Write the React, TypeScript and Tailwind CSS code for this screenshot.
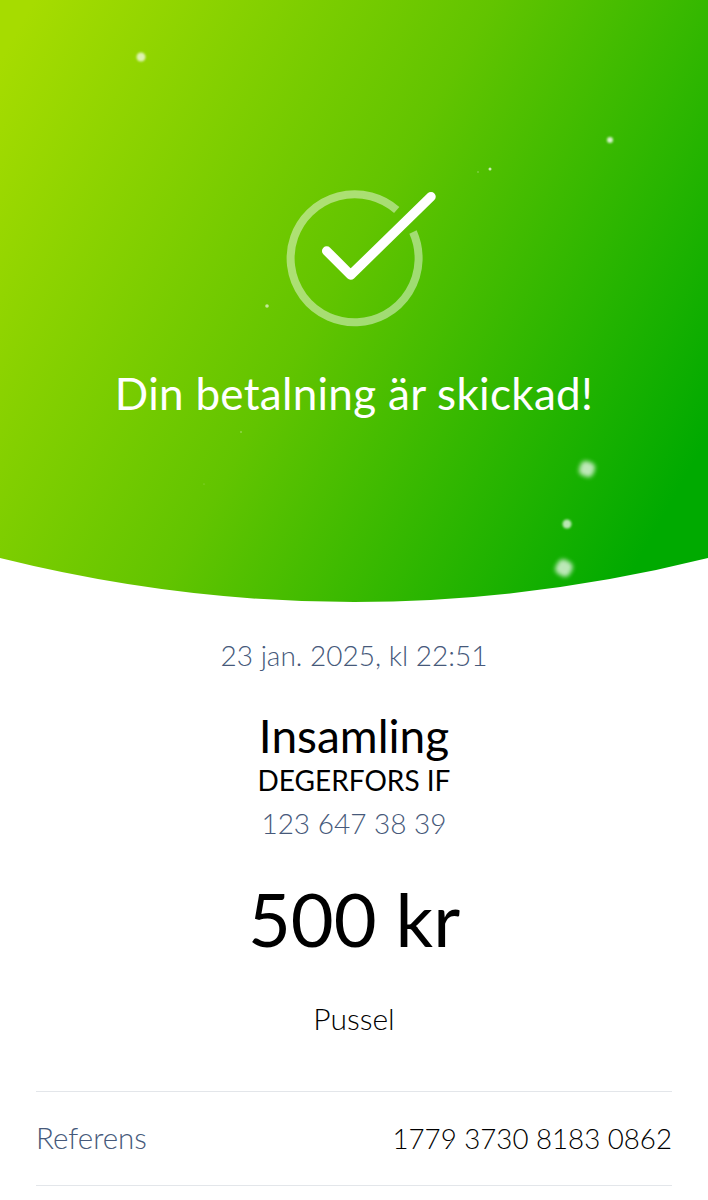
import React from 'react';

const DOTS = [
  { x: 141, y: 57, r: 4.5, o: 0.7 },
  { x: 610, y: 140, r: 3, o: 0.8 },
  { x: 490, y: 169, r: 1.5, o: 0.7 },
  { x: 478, y: 172, r: 0.7, o: 0.5 },
  { x: 267, y: 306, r: 1.8, o: 0.6 },
  { x: 241, y: 432, r: 0.7, o: 0.6 },
  { x: 204, y: 484, r: 0.5, o: 0.4 },
  { x: 567, y: 524, r: 4.5, o: 0.7 },
];

// the big flakes are soft rounded squares, not circles
const FLAKES = [
  { x: 587, y: 469, s: 15, a: 20 },
  { x: 564, y: 568, s: 16, a: 30 },
];

const HeaderBackground = () => (
  <svg className="absolute inset-0" width="708" height="602" viewBox="0 0 708 602">
    <defs>
      <linearGradient id="header" gradientUnits="userSpaceOnUse" x1="0" y1="60" x2="699" y2="454">
        <stop offset="0" stopColor="#a6dc00" />
        <stop offset="0.5" stopColor="#62c400" />
        <stop offset="1" stopColor="#00aa00" />
      </linearGradient>
      <filter id="soft" x="-50%" y="-50%" width="200%" height="200%">
        <feGaussianBlur stdDeviation="1.1" />
      </filter>
      <filter id="softer" x="-50%" y="-50%" width="200%" height="200%">
        <feGaussianBlur stdDeviation="2" />
      </filter>
    </defs>
    <path d="M0 0H708V558Q354 646 0 558Z" fill="url(#header)" />
    {DOTS.map((d) => (
      <circle key={`${d.x}-${d.y}`} cx={d.x} cy={d.y} r={d.r} fill="#fff" opacity={d.o} filter={d.r > 2 ? 'url(#soft)' : undefined} />
    ))}
    {FLAKES.map((f) => (
      <rect
        key={f.x}
        x={f.x - f.s / 2}
        y={f.y - f.s / 2}
        width={f.s}
        height={f.s}
        rx={f.s * 0.35}
        fill="#fff"
        opacity="0.72"
        filter="url(#softer)"
        transform={`rotate(${f.a} ${f.x} ${f.y})`}
      />
    ))}
  </svg>
);

const CheckMark = () => (
  <svg width="160" height="150" viewBox="0 0 160 150" className="relative">
    <path d="M116.7 30A64 64 0 1 0 133 52" fill="none" stroke="#fff" strokeOpacity="0.45" strokeWidth="8" />
    <path d="M46.7 71L70.7 95L151 16.7" fill="none" stroke="#fff" strokeWidth="9.5" strokeLinecap="round" strokeLinejoin="round" />
  </svg>
);

export default function App() {
  return (
    <div className="w-[708px] h-[1200px] overflow-hidden bg-white font-['Lato',sans-serif] text-center text-black">
      <header className="relative h-[602px] flex flex-col items-center pt-[180px]">
        <HeaderBackground />
        <div className="relative pl-[12px]"><CheckMark /></div>
        <h1 className="relative mt-[38px] text-[44px] leading-[50px] tracking-[0.3px] font-normal text-white">Din betalning är skickad!</h1>
      </header>

      <p className="mt-[35px] text-[28px] leading-[36px] font-light text-[#46597a]">23 jan. 2025, kl 22:51</p>
      <p className="mt-[37px] text-[46px] leading-[52px]">Insamling</p>
      <p className="text-[28px] leading-[34px] mt-[1px]">DEGERFORS IF</p>
      <p className="mt-[8px] text-[28px] leading-[36px] font-light text-[#46597a]">123 647 38 39</p>
      <p className="mt-[34px] text-[74px] leading-[88px]">500 kr</p>
      <p className="mt-[38px] text-[30px] leading-[34px] font-light">Pussel</p>

      <div className="mx-[36px] mt-[56px] border-y border-[#e3e6ea] h-[95px] flex items-center justify-between">
        <span className="text-[29.5px] font-light text-[#46597a]">Referens</span>
        <span className="text-[27.7px] font-light">1779 3730 8183 0862</span>
      </div>
    </div>
  );
}
